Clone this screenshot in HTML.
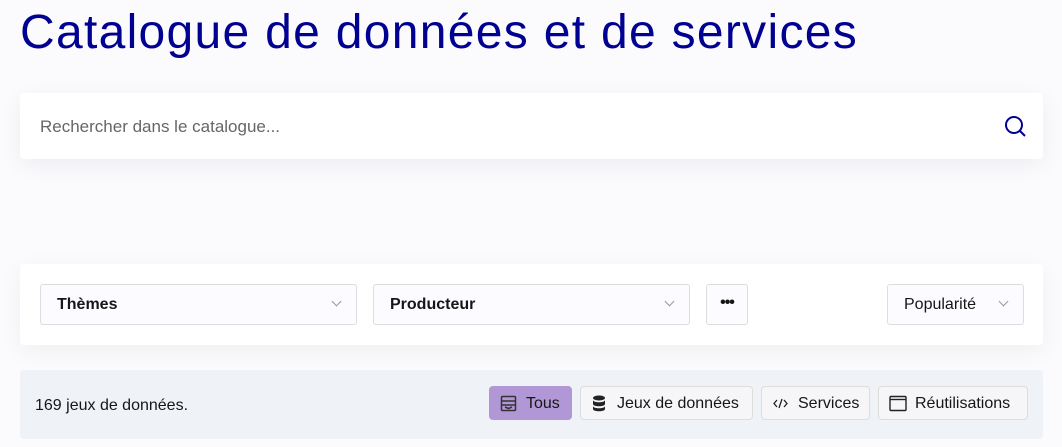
<!DOCTYPE html>
<html><head><meta charset="utf-8"><style>
*{box-sizing:border-box;margin:0;padding:0}
body{width:1062px;height:447px;background:#fbfbfd;font-family:"Liberation Sans",sans-serif;position:relative;overflow:hidden;color:#161616}
h1{position:absolute;left:20px;top:5px;font-size:48px;font-weight:400;color:#000091;white-space:nowrap;letter-spacing:1.3px}
.search{position:absolute;left:20px;top:93px;width:1023px;height:66px;background:#fff;border-radius:4px;box-shadow:0 6px 24px rgba(0,0,60,.06)}
.search span{position:absolute;left:20px;top:24px;font-size:17px;color:#666}
.search svg{position:absolute;right:16px;top:21px}
.panel{position:absolute;left:20px;top:264px;width:1023px;height:81px;background:#fff;border-radius:4px;box-shadow:0 6px 24px rgba(0,0,60,.05)}
.sel{position:absolute;top:20px;height:41px;border:1px solid #ddd;border-radius:3px;background:#fcfbff;font-size:16px;font-weight:bold;color:#161616;padding:11px 16px}
.sel i{position:absolute;right:16px;top:13px;width:7px;height:7px;border-right:1.5px solid #999;border-bottom:1.5px solid #999;transform:rotate(45deg)}
.bar{position:absolute;left:20px;top:370px;width:1023px;height:69px;background:#eff2f7;border-radius:4px}
.bar .cnt{position:absolute;left:15px;top:27px;font-size:16px}
.tab{position:absolute;top:16px;height:34px;border:1px solid #ddd;border-radius:4px;background:#f6f6f8;font-size:16px;padding:8px 8px 0 36px;white-space:nowrap}
.tab svg{position:absolute;left:10px;top:8px}
</style></head><body>
<h1>Catalogue de données et de services</h1>
<div class="search"><span>Rechercher dans le catalogue...</span>
<svg width="24" height="24" viewBox="0 0 24 24" fill="none" stroke="#000091" stroke-width="2"><circle cx="11" cy="11" r="8"/><path d="M17 17l5 5"/></svg></div>
<div class="panel">
<div class="sel" style="left:20px;width:317px">Thèmes<i></i></div>
<div class="sel" style="left:353px;width:317px">Producteur<i></i></div>
<div class="sel" style="left:686px;width:42px;padding:9px 0;text-align:center;letter-spacing:-1px">•••</div>
<div class="sel" style="left:867px;width:137px;font-weight:400;padding-left:16px">Popularité<i></i></div>
</div>
<div class="bar"><span class="cnt">169 jeux de données.</span>
<div class="tab" style="left:469px;width:83px;background:#b197d6;border-color:#b197d6">
<svg width="17" height="17" viewBox="0 0 17 17" fill="none" stroke="#333" stroke-width="1.5"><rect x="1.5" y="1.5" width="14" height="14" rx="1"/><path d="M1.5 6h14M1.5 10h14M5 12l3.5 1.5 3.5-1.5"/></svg>Tous</div>
<div class="tab" style="left:560px;width:173px">
<svg width="16" height="17" viewBox="0 0 16 17" fill="#222"><ellipse cx="8" cy="3" rx="6" ry="2.5"/><path d="M2 5c0 3 12 3 12 0v4c0 3-12 3-12 0zM2 11c0 3 12 3 12 0v3c0 3-12 3-12 0z"/></svg>Jeux de données</div>
<div class="tab" style="left:741px;width:109px">
<svg width="17" height="17" viewBox="0 0 17 17" fill="none" stroke="#222" stroke-width="1.3"><path d="M5 5l-3 3.5 3 3.5M12 5l3 3.5-3 3.5M10 4l-3 9"/></svg>Services</div>
<div class="tab" style="left:858px;width:150px">
<svg width="18" height="17" viewBox="0 0 18 17" fill="none" stroke="#222" stroke-width="1.4"><rect x="1" y="1.5" width="16" height="14" rx="1"/><path d="M1 4.5h16"/></svg>Réutilisations</div>
</div>
</body></html>
